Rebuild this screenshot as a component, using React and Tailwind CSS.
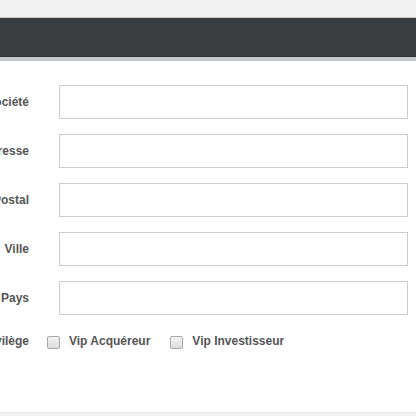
import React from 'react';

const fields = ['Société', 'Adresse', 'Code Postal', 'Ville', 'Pays'];

export default function App() {
  return (
    <div className="w-[416px] h-[416px] overflow-hidden bg-white flex flex-col" style={{ fontFamily: '"Liberation Sans", Arial, sans-serif' }}>
      <div className="h-[18px] bg-[#f1f1f1] border-b border-[#c9cbcc]"></div>
      <div className="h-[39px] bg-[#3b3e41] border-b border-[#2f3234]"></div>
      <div className="h-[4px] bg-[#c4c8cb]"></div>

      <div className="flex-1 pt-[24px]">
        {fields.map((label) => (
          <div key={label} className="flex items-center h-[34px] mb-[15px]">
            <div className="w-[29px] overflow-hidden flex justify-end shrink-0">
              <span className="whitespace-nowrap text-[12px] font-bold text-[#555]">{label}</span>
            </div>
            <div className="w-[30px] shrink-0"></div>
            <div className="w-[349px] h-[34px] border border-[#cccccc] bg-white"></div>
          </div>
        ))}

        <div className="flex items-center h-[22px] mt-[6px]">
          <div className="w-[29px] overflow-hidden flex justify-end shrink-0">
            <span className="whitespace-nowrap text-[12px] font-bold text-[#555]">Privilège</span>
          </div>
          <div className="w-[18px] shrink-0"></div>
          <span className="w-[13px] h-[13px] mt-[3px] rounded-[2px] border border-[#a9a9a9] bg-gradient-to-b from-[#f4f4f4] to-[#dcdcdc] shrink-0"></span>
          <span className="ml-[9px] text-[12px] font-bold text-[#555] whitespace-nowrap">Vip Acquéreur</span>
          <span className="ml-[20px] w-[13px] h-[13px] mt-[3px] rounded-[2px] border border-[#a9a9a9] bg-gradient-to-b from-[#f4f4f4] to-[#dcdcdc] shrink-0"></span>
          <span className="ml-[9px] text-[12px] font-bold text-[#555] whitespace-nowrap">Vip Investisseur</span>
        </div>
      </div>

      <div className="h-[4px] bg-[#f1f1f1] border-t border-[#e2e2e2]"></div>
    </div>
  );
}
